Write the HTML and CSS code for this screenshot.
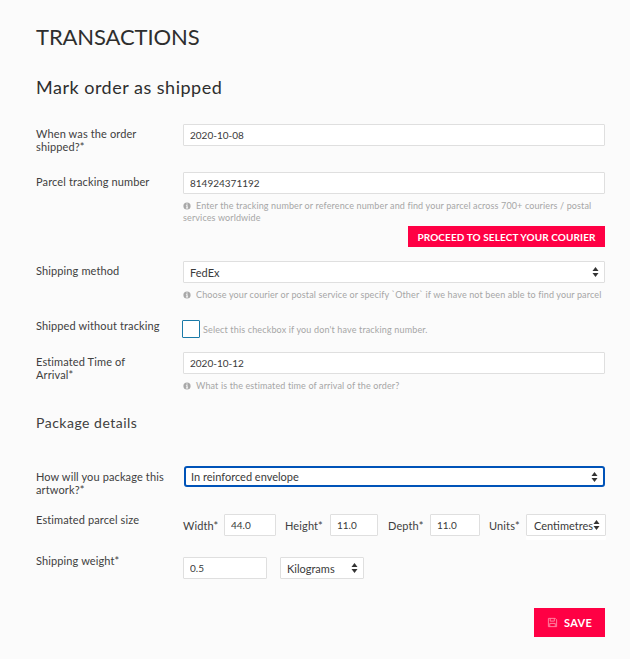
FILE: index.html
```html
<!DOCTYPE html>
<html lang="en">
<head>
    <meta charset="UTF-8">
    <meta name="viewport" content="width=device-width, initial-scale=1">
    <title>Transactions</title>
    <link rel="stylesheet" href="styles.css">
</head>
<body>
<svg class="sprite" width="0" height="0">
    <symbol id="info" viewBox="0 0 8 8">
        <circle cx="4" cy="4" r="3.6" fill="#a8a8a8"></circle>
        <rect x="3.4" y="1.5" width="1.2" height="1.1" fill="#fbfbfb"></rect>
        <path d="M2.9 3.3h1.7v2.3h.5v.8H2.9v-.8h.6V4.1h-.6z" fill="#fbfbfb"></path>
    </symbol>
</svg>

<h1>TRANSACTIONS</h1>
<h2>Mark order as shipped</h2>

<form>
    <div class="row first">
        <label>When was the order shipped?*</label>
        <div><input class="field" type="text" value="2020-10-08"></div>
    </div>

    <div class="row tracking">
        <label>Parcel tracking number</label>
        <div>
            <input class="field" type="text" value="814924371192">
            <p class="help"><svg class="info"><use href="#info"></use></svg>Enter the tracking number or reference number and find your parcel across 700+ couriers / postal services worldwide</p>
            <div class="proceed"><button type="button" class="btn">PROCEED TO SELECT YOUR COURIER</button></div>
        </div>
    </div>

    <div class="row method">
        <label>Shipping method</label>
        <div>
            <select class="field"><option>FedEx</option></select>
            <p class="help"><svg class="info"><use href="#info"></use></svg>Choose your courier or postal service or specify `Other` if we have not been able to find your parcel</p>
        </div>
    </div>

    <div class="row notrack">
        <label class="flush">Shipped without tracking</label>
        <div class="check-wrap">
            <span class="check"></span>
            <span class="check-text">Select this checkbox if you don't have tracking number.</span>
        </div>
    </div>

    <div class="row eta">
        <label>Estimated Time of Arrival*</label>
        <div>
            <input class="field" type="text" value="2020-10-12">
            <p class="help"><svg class="info"><use href="#info"></use></svg>What is the estimated time of arrival of the order?</p>
        </div>
    </div>

    <h3>Package details</h3>

    <div class="row package">
        <label>How will you package this artwork?*</label>
        <div class="focus-wrap">
            <select class="field focused"><option>In reinforced envelope</option></select>
        </div>
    </div>

    <div class="row size">
        <label class="flush">Estimated parcel size</label>
        <div class="dims">
            <span class="dim-label l-width">Width*</span>
            <input class="field w-width" type="text" value="44.0">
            <span class="dim-label l-height">Height*</span>
            <input class="field w-height" type="text" value="11.0">
            <span class="dim-label l-depth">Depth*</span>
            <input class="field w-depth" type="text" value="11.0">
            <span class="dim-label l-units">Units*</span>
            <select class="field w-units"><option>Centimetres</option></select>
        </div>
    </div>

    <div class="row weight">
        <label class="flush">Shipping weight*</label>
        <div class="weights">
            <input class="field w-weight" type="text" value="0.5">
            <select class="field w-kilos"><option>Kilograms</option></select>
        </div>
    </div>

    <div class="actions">
        <button type="button" class="btn save">
            <svg class="disk" viewBox="0 0 12 12" width="11" height="11" fill="none" stroke="#ff8aa6" stroke-width="1">
                <path d="M1.5 1.5h7.500l1.500 1.500v7.500h-9z"></path>
                <path d="M3.500 1.500v3h4.500v-3"></path>
                <path d="M3 10.500v-3.500h6v3.500"></path>
            </svg>SAVE
        </button>
    </div>
</form>
</body>
</html>
```

FILE: styles.css
```css
body {
    margin: 0;
    padding: 0 25px 0 36px;
    background: #fbfbfb;
    color: #404040;
    font-family: "Lato", "Liberation Sans", sans-serif;
    font-size: 11px;
    letter-spacing: 0.12px;
}

.sprite {
    position: absolute;
}

h1 {
    margin: 0;
    padding-top: 24px;
    font-size: 22px;
    line-height: 26px;
    font-weight: 400;
    color: #2e2e2e;
    letter-spacing: -0.1px;
}

h2 {
    margin: 26px 0 0;
    font-size: 18px;
    line-height: 22px;
    font-weight: 400;
    color: #2e2e2e;
    letter-spacing: 0.5px;
}

h3 {
    margin: 22px 0 0;
    font-size: 14px;
    line-height: 18px;
    font-weight: 400;
    letter-spacing: 0.5px;
}

.row {
    display: grid;
    grid-template-columns: 147px 1fr;
}

.row > label {
    display: block;
    padding: 3px 14px 0 0;
    line-height: 13px;
}

.row > label.flush {
    padding-top: 0;
    margin-top: -1px;
}

.first { margin-top: 26px; }
.tracking { margin-top: 19px; }
.method { margin-top: 14px; }
.notrack { margin-top: 19px; }
.eta { margin-top: 14px; }
.eta > label { padding-right: 30px; }
.package { margin-top: 34px; }
.package > label { padding-top: 4px; }
.size { margin-top: 18px; }
.weight { margin-top: 21px; }
.weight > label.flush { margin-top: -3px; }

.field {
    display: block;
    box-sizing: border-box;
    width: 100%;
    height: 22px;
    margin: 0;
    padding: 0 6px;
    background: #fff;
    border: 1px solid #dfdfdf;
    border-radius: 1px;
    outline: none;
    color: #3a3a3a;
    font-family: inherit;
    font-size: 10px;
    letter-spacing: 0;
}

select.field {
    appearance: none;
    font-size: 11px;
    background-image: url("data:image/svg+xml,%3Csvg xmlns='http://www.w3.org/2000/svg' width='7' height='10'%3E%3Cpath d='M3.500 0l3 4h-6zM3.500 10l3-4h-6z' fill='%23333'/%3E%3C/svg%3E");
    background-repeat: no-repeat;
    background-position: right 5px center;
}

.help {
    margin: 6px 0 0;
    line-height: 12px;
    font-size: 9px;
    color: #a6a6a6;
    letter-spacing: 0.13px;
}

.info {
    width: 8px;
    height: 8px;
    margin-right: 5px;
    vertical-align: -1px;
}

.proceed {
    display: flex;
    justify-content: flex-end;
    margin-top: 2px;
}

.btn {
    border: 0;
    background: #ff0044;
    color: #fff;
    font-family: inherit;
    font-weight: 700;
    font-size: 10px;
    letter-spacing: 0.1px;
    height: 21px;
    width: 197px;
    padding: 0;
}

.check-wrap {
    display: flex;
    align-items: center;
    margin-left: -1px;
}

.check {
    box-sizing: border-box;
    width: 18px;
    height: 18px;
    background: #fff;
    border: 1px solid #1a7aa8;
    border-radius: 1px;
}

.check-text {
    margin-left: 3px;
    padding-top: 1px;
    font-size: 9px;
    color: #a6a6a6;
    letter-spacing: 0.15px;
}

.focus-wrap {
    padding-left: 1px;
}

.focused {
    width: 421px;
    height: 21px;
    border: 2px solid #0053b8;
    border-radius: 3px;
    padding: 0 5px;
}

.dims,
.weights {
    display: flex;
    align-items: center;
}

.dim-label {
    flex: none;
    white-space: nowrap;
}

.l-width { width: 41px; }
.l-height { width: 45px; }
.l-depth { width: 42px; }
.l-units { width: 37px; }

.dims .field {
    flex: none;
}

.dims .w-width { width: 52px; margin-right: 9px; }
.dims .w-height { width: 48px; margin-right: 10px; }
.dims .w-depth { width: 50px; margin-right: 9px; }
.dims .w-units {
    width: 80px;
    padding: 0 0 0 7px;
    box-shadow: 0 4px 0 #fff;
}

.w-weight { width: 84px; margin-right: 13px; }
.w-kilos { width: 84px; }

.actions {
    display: flex;
    justify-content: flex-end;
    margin-top: 29px;
    padding-bottom: 22px;
}

.save {
    display: flex;
    align-items: center;
    justify-content: center;
    width: 71px;
    height: 29px;
    font-size: 11px;
    letter-spacing: 0.3px;
}

.disk {
    margin-right: 6px;
}
```
